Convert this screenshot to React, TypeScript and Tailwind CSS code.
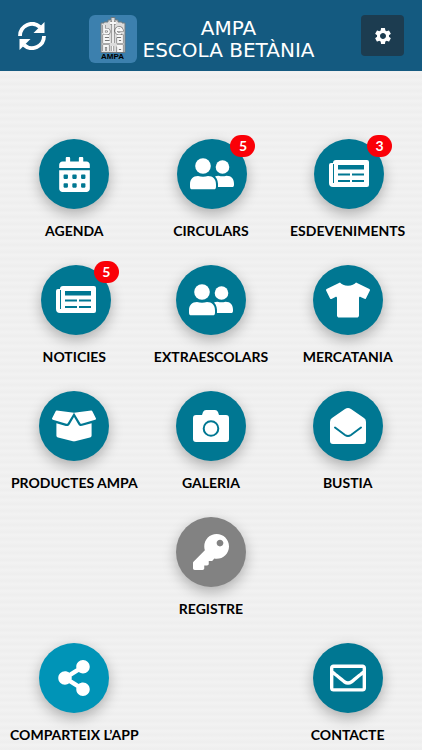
import type { ReactNode } from "react"
import { FaBoxOpen, FaCalendarAlt, FaKey, FaRegEnvelope, FaShareAlt, FaTshirt } from "react-icons/fa"
import { MdSettings } from "react-icons/md"

function SyncIcon() {
    return (
        <svg className="size-7" viewBox="0 0 28 28" fill="none" stroke="white" strokeWidth="3.800">
            <path d="M2 14A12 12 0 0 1 22 5" />
            <path d="M26 14A12 12 0 0 1 6 23" />
            <path d="M26.500 0v11H15.500z" fill="white" stroke="none" />
            <path d="M1.500 28V17h11z" fill="white" stroke="none" />
        </svg>
    )
}

const letters = "M4 8v8M4 12.500h3a2 2 0 1 1 0 4H4M16.500 13h5.500a3 3 0 1 0-1 3M9 19H4v6h6M4 22h5M17 19h5v6h-4v-3h4M4 34v-5h4v5M12.500 29v5M17 29h5v5h-4v-3h4M13 3v23M10 6h6"

function Logo() {
    return (
        <svg className="h-9 w-[26px]" viewBox="0 0 26 36" aria-hidden="true">
            <path d="M1 35.500V6h3V5h4V3h3V.5h4V3h3v2h4v1h3v29.500z" fill="#dcdcdc" stroke="#6f7a80" strokeWidth="1" />
            <path d={letters} fill="none" stroke="#777" strokeWidth="3.200" />
            <path d={letters} fill="none" stroke="#f7f7f7" strokeWidth="1.800" />
        </svg>
    )
}

function PeopleIcon() {
    return (
        <svg className="h-8 w-11" viewBox="0 0 44 32" fill="white">
            <circle cx="13" cy="8" r="7.800" />
            <path d="M0 28.500v-2C0 21 3 18 8 18q5 1.500 10 0c5 0 8 3 8 8.500v2c0 2-.5 2.800-2.500 2.800h-21C.5 31.300 0 30.500 0 28.500z" />
            <circle cx="32.500" cy="9" r="6.800" />
            <path d="M25 18.500q1.500-.8 3.500-.8 4 1.200 8 0c5 0 7.500 3 7.500 8v1c0 1.600-.6 2.300-2 2.300H28c.3-4.500-.5-8-3-10.500z" />
        </svg>
    )
}

function NewsIcon() {
    return (
        <svg className="h-7 w-10" viewBox="0 0 40 28">
            <path d="M7 0h31a2 2 0 0 1 2 2v23a2 2 0 0 1-2 2H4a4 4 0 0 1-4-4V5a2 2 0 0 1 2-2h2a3 3 0 0 1 3-3z" fill="white" />
            <path d="M4.500 4v19" stroke="#007792" strokeWidth="1" />
            <path d="M9 5h26v4.500H9zM9 13.500h12v2H9zM23 13.500h12v2H23zM9 20h12v2H9zM23 20h12v2H23z" fill="#007792" />
        </svg>
    )
}

function CameraIcon() {
    return (
        <svg className="h-8 w-9" viewBox="0 0 36 32">
            <path d="M3 5h6l1-3q1-2 3-2h9q2 0 3 2l1 3h7a3 3 0 0 1 3 3v21a3 3 0 0 1-3 3H3a3 3 0 0 1-3-3V8a3 3 0 0 1 3-3z" fill="white" />
            <circle cx="18" cy="18.500" r="7.300" fill="none" stroke="#007792" strokeWidth="2" />
        </svg>
    )
}

function MailOpenIcon() {
    return (
        <svg className="size-9" viewBox="0 0 36 36">
            <path d="M2 10L15 1q3-2 6 0l13 9q2 1 2 4v19a3 3 0 0 1-3 3H3a3 3 0 0 1-3-3V14q0-3 2-4z" fill="white" />
            <path d="M5 19.500l10 7.500q3 2 6 0l10-7.500" fill="none" stroke="#007792" strokeWidth="2" strokeLinecap="round" />
        </svg>
    )
}

type TileProps = {
    label: string
    icon: ReactNode
    badge?: number
    color?: string
}

function Tile({ label, icon, badge, color = "bg-[#007792]" }: TileProps) {
    return (
        <button className="flex flex-col items-center gap-3">
            <span className={`relative flex size-[70px] items-center justify-center rounded-full text-white shadow-[0_5px_14px_rgba(0,0,0,0.28)] ${badge ? "ml-[3px]" : ""} ${color}`}>
                {icon}
                {badge && (
                    <span className="absolute -top-1 -right-2 flex h-[22px] w-[25px] items-center justify-center rounded-full bg-[#fa0007] text-sm font-bold">{badge}</span>
                )}
            </span>
            <span className="text-sm leading-5 font-bold whitespace-nowrap text-black">{label}</span>
        </button>
    )
}

export default function App() {
    return (
        <div className="min-h-screen bg-[#f0f0f0] bg-[repeating-linear-gradient(180deg,#eeeeee_0px,#f2f2f2_3px,#f0f0f0_5px,#eeeeee_7px)] font-['Lato',sans-serif]">
            <header className="grid h-[71px] grid-cols-[64px_1fr_79px] items-center bg-[#145a80]">
                <button aria-label="Actualitza" className="flex justify-center">
                    <SyncIcon />
                </button>
                <div className="flex items-center justify-center gap-1.5 pt-1.5 pr-1">
                    <div className="flex size-12 shrink-0 flex-col items-center rounded-md bg-[#3c80ae] pt-0.5">
                        <Logo />
                        <span className="font-['Liberation_Sans',sans-serif] text-[8px] leading-2 font-bold text-black">AMPA</span>
                    </div>
                    <h1 className="text-center font-['DejaVu_Sans',sans-serif] text-[20px] leading-[22px] whitespace-nowrap text-white">
                        AMPA<br />ESCOLA BETÀNIA
                    </h1>
                </div>
                <button aria-label="Configuració" className="mx-auto flex h-[41px] w-[43px] items-center justify-center rounded bg-[#1c3c50] text-white">
                    <MdSettings size={20} />
                </button>
            </header>

            <main className="pt-[68px]">
                <div className="grid grid-cols-3 gap-y-6 px-1.5">
                    <Tile label="AGENDA" icon={<FaCalendarAlt size={35} />} />
                    <Tile label="CIRCULARS" icon={<PeopleIcon />} badge={5} />
                    <Tile label="ESDEVENIMENTS" icon={<NewsIcon />} badge={3} />
                    <Tile label="NOTICIES" icon={<NewsIcon />} badge={5} />
                    <Tile label="EXTRAESCOLARS" icon={<PeopleIcon />} />
                    <Tile label="MERCATANIA" icon={<FaTshirt size={44} />} />
                    <Tile label="PRODUCTES AMPA" icon={<FaBoxOpen size={44} />} />
                    <Tile label="GALERIA" icon={<CameraIcon />} />
                    <Tile label="BUSTIA" icon={<MailOpenIcon />} />
                    <div className="col-start-2 flex justify-center">
                        <Tile label="REGISTRE" icon={<FaKey size={36} />} color="bg-[#828282]" />
                    </div>
                </div>
                <div className="grid grid-cols-3 px-1.5 pt-6">
                    <Tile label="COMPARTEIX L’APP" icon={<FaShareAlt size={36} />} color="bg-[#0094b7]" />
                    <div className="col-start-3 flex justify-center">
                        <Tile label="CONTACTE" icon={<FaRegEnvelope size={36} />} />
                    </div>
                </div>
            </main>
        </div>
    )
}
